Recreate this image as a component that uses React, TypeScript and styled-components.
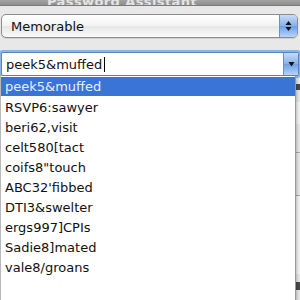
import { createGlobalStyle, styled } from "styled-components";

const GlobalStyle = createGlobalStyle`
  html, body {
    margin: 0;
    padding: 0;
    background: #e8e8e8;
    overflow: hidden;
  }
`;

const Window = styled.div`
  width: 300px;
  height: 300px;
  position: relative;
  overflow: hidden;
  background: #e8e8e8;
  font-family: "DejaVu Sans", "Liberation Sans", sans-serif;
  font-size: 13px;
  display: flex;
  flex-direction: column;
`;

const TitleBar = styled.div`
  height: 5px;
  overflow: hidden;
  background: linear-gradient(#a4a4a4, #8e8e8e);
  border-bottom: 1px solid #7a7a7a;
  display: flex;
  align-items: flex-end;
  padding-left: 47px;
`;

const TitleText = styled.span`
  color: #e4e4e4;
  font-weight: bold;
  font-size: 13px;
  line-height: 13px;
  margin-bottom: -3px;
  letter-spacing: 0.4px;
`;

const Body = styled.div`
  display: flex;
  flex-direction: column;
  padding: 8px 2px 0 1px;
`;

const PopupButton = styled.div`
  height: 22px;
  display: flex;
  border: 1px solid #8c8c8c;
  border-radius: 5px;
  background: linear-gradient(#ffffff, #f2f2f2 50%, #e6e6e6 51%, #fafafa);
  box-shadow: 0 1px 0 #d0d0d0;
  overflow: hidden;
`;

const PopupLabel = styled.div`
  flex: 1;
  padding-left: 9px;
  display: flex;
  align-items: center;
  color: #111;
`;

const Stepper = styled.div`
  width: 17px;
  border-left: 1px solid #6f8fbf;
  background: linear-gradient(#c9dcf6, #86b0ea 50%, #6d9fe6 51%, #b5d4fb);
  display: flex;
  align-items: center;
  justify-content: center;
`;

const ComboRow = styled.div`
  margin-top: 14px;
  margin-right: -1px;
  height: 22px;
  display: flex;
  border: 1px solid #5a84bf;
  border-radius: 2px;
  box-shadow: 0 0 0 2px #8db2e3;
  background: #fff;
`;

const ComboField = styled.div`
  flex: 1;
  display: flex;
  align-items: center;
  padding-left: 4px;
  color: #111;
`;

const Caret = styled.span`
  width: 1px;
  height: 15px;
  background: #000;
  margin-left: 2px;
`;

const ComboButton = styled.div`
  width: 14px;
  border-left: 1px solid #6f8fbf;
  background: linear-gradient(#c9dcf6, #86b0ea 50%, #6d9fe6 51%, #b5d4fb);
  display: flex;
  align-items: center;
  justify-content: center;
`;

const RightStrip = styled.div`
  position: absolute;
  top: 76px;
  right: 0;
  width: 5px;
  height: 224px;
  display: flex;
  flex-direction: column;
`;

const StripPiece = styled.div<{ $h: number; $line?: boolean; $box?: boolean; $dark?: boolean }>`
  height: ${(p) => p.$h}px;
  border-top: ${(p) => (p.$line ? "1px solid #a8a8a8" : "none")};
  border-left: ${(p) => (p.$box ? "1px solid #b0b0b0" : "none")};
  background: ${(p) => (p.$dark ? "#4a4a4a" : p.$box ? "#f4f4f4" : "transparent")};
`;

const Menu = styled.div`
  position: absolute;
  top: 76px;
  left: 0;
  width: 294px;
  height: 240px;
  background: #fff;
  border-left: 1px solid #b8b8b8;
  border-right: 1px solid #9a9a9a;
  box-shadow: 1px 2px 3px rgba(0, 0, 0, 0.25);
  display: flex;
  flex-direction: column;
  padding-top: 1px;
`;

const MenuItem = styled.div<{ $selected?: boolean }>`
  height: ${(p) => (p.$selected ? "19px" : "20px")};
  margin-bottom: ${(p) => (p.$selected ? "1px" : "0")};
  display: flex;
  align-items: center;
  padding-left: 4px;
  color: ${(p) => (p.$selected ? "#e8eeff" : "#111")};
  background: ${(p) => (p.$selected ? "#3a74d5" : "transparent")};
`;

const items = [
  "RSVP6:sawyer",
  "beri62,visit",
  "celt580[tact",
  'coifs8"touch',
  "ABC32'fibbed",
  "DTI3&swelter",
  "ergs997]CPIs",
  "Sadie8]mated",
  "vale8/groans",
];

function UpDownArrows() {
  return (
    <svg width="7" height="12" viewBox="0 0 7 12">
      <path d="M3.5 1 L6.5 5 L0.5 5 Z" fill="#111" />
      <path d="M3.5 11 L6.5 7 L0.5 7 Z" fill="#111" />
    </svg>
  );
}

function DownArrow() {
  return (
    <svg width="7" height="6" viewBox="0 0 7 6">
      <path d="M0.5 1 L6.5 1 L3.5 5.5 Z" fill="#111" />
    </svg>
  );
}

export default function App() {
  return (
    <Window>
      <GlobalStyle />
      <TitleBar>
        <TitleText>Password Assistant</TitleText>
      </TitleBar>
      <Body>
        <PopupButton>
          <PopupLabel>Memorable</PopupLabel>
          <Stepper>
            <UpDownArrows />
          </Stepper>
        </PopupButton>
        <ComboRow>
          <ComboField>
            peek5&amp;muffed
            <Caret />
          </ComboField>
          <ComboButton>
            <DownArrow />
          </ComboButton>
        </ComboRow>
      </Body>
      <RightStrip>
        <StripPiece $h={8} />
        <StripPiece $h={6} $dark />
        <StripPiece $h={12} />
        <StripPiece $h={22} $box />
        <StripPiece $h={28} />
        <StripPiece $h={42} $line />
        <StripPiece $h={78} $line $box />
        <StripPiece $h={8} />
        <StripPiece $h={8} $dark />
      </RightStrip>
      <Menu>
        <MenuItem $selected>peek5&amp;muffed</MenuItem>
        {items.map((t) => (
          <MenuItem key={t}>{t}</MenuItem>
        ))}
      </Menu>
    </Window>
  );
}
